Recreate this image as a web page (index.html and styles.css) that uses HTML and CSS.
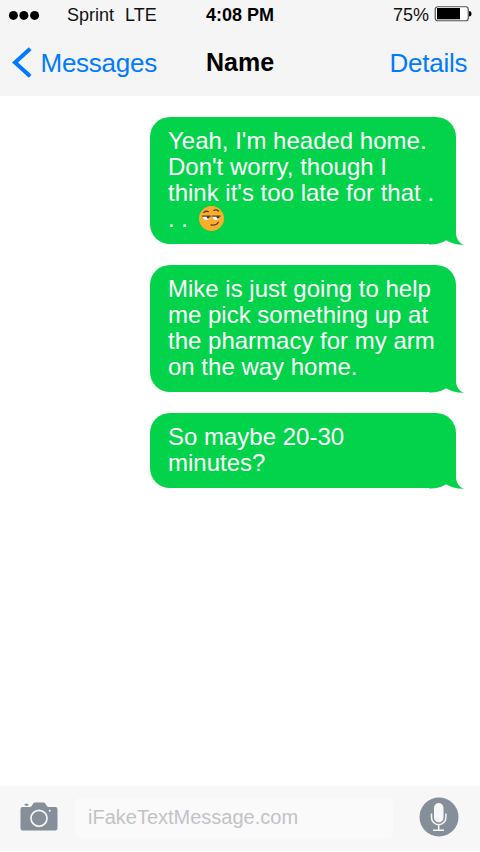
FILE: index.html
```html
<!DOCTYPE html>
<html lang="en">
<head>
<meta charset="utf-8">
<title>Messages</title>
<link rel="stylesheet" href="styles.css">
</head>
<body>
<div class="phone">
  <header class="top">
    <div class="status">
      <svg class="signal" width="32" height="10" viewBox="0 0 32 10"><circle cx="5.4" cy="5.4" r="4.5"/><circle cx="15.9" cy="5.4" r="4.5"/><circle cx="26.6" cy="5.4" r="4.5"/></svg>
      <span class="carrier">Sprint</span><span class="network">LTE</span>
      <span class="time">4:08 PM</span>
      <span class="percent">75%</span>
      <svg class="battery" width="38" height="16" viewBox="0 0 38 16"><rect x="1.25" y=".75" width="33" height="14" rx="2.5" fill="#fff" stroke="#555" stroke-width="1.2"/><rect x="3" y="2" width="23" height="11.3"/><path d="M35 5q2.5 0 2.5 2.7t-2.5 2.7z"/></svg>
    </div>
    <nav class="nav">
      <svg class="back" width="22" height="32" viewBox="0 0 22 32"><path d="M20.2 1.7 5 15.500 20.200 29.300" fill="none" stroke="#007aff" stroke-width="4"/></svg>
      <span class="messages">Messages</span>
      <h1>Name</h1>
      <span class="details">Details</span>
    </nav>
  </header>
  <main class="chat">
    <div class="bubble">Yeah, I'm headed home.<br>Don't worry, though I<br>think it's too late for that .<br>. . <svg class="emoji" viewBox="0 0 24 24"><circle cx="12" cy="12" r="12" fill="#fbad2b"/><path d="M3.500 9.700h7.200c0 5-7.200 5-7.200 0zm9.300 0H20c0 5-7.200 5-7.200 0z" fill="#fff"/><path d="M7.300 9.500h3c.2 3.400-3 3.400-3 0zm9.400 0h3c.2 3.400-3 3.400-3 0z" fill="#45352c"/><path d="M3.300 9.600h7.600m1.800 0h7.600M4.500 6.200q2.400-1.800 4.500-.8M14.300 4.200q2.400-1.400 4.500.6M11.500 18.200q5.500.5 7-2.700" fill="none" stroke="#59402a" stroke-width="1.200" stroke-linecap="round"/></svg><svg class="tail" viewBox="0 0 36 20"><path class="notch" d="M0 19.500 17 14 36 20z"/><path d="M0 10H27V8C27 13 30 18.500 35 19.800 28 20 21.500 18 17 15.300 12 18.700 7 19.800 0 19.600z"/></svg></div>
    <div class="bubble">Mike is just going to help<br>me pick something up at<br>the pharmacy for my arm<br>on the way home.<svg class="tail" viewBox="0 0 36 20"><path class="notch" d="M0 19.500 17 14 36 20z"/><path d="M0 10H27V8C27 13 30 18.500 35 19.800 28 20 21.500 18 17 15.300 12 18.700 7 19.800 0 19.600z"/></svg></div>
    <div class="bubble">So maybe 20-30<br>minutes?<svg class="tail" viewBox="0 0 36 20"><path class="notch" d="M0 19.500 17 14 36 20z"/><path d="M0 10H27V8C27 13 30 18.500 35 19.800 28 20 21.500 18 17 15.300 12 18.700 7 19.800 0 19.600z"/></svg></div>
  </main>
  <footer class="compose">
    <svg class="camera" width="38" height="30" viewBox="0 0 38 30"><path d="M2.500 5H10q1.500 0 2.500-2.300Q13.300.5 15 .5h8.500q1.700 0 2.500 2.200Q27 5 28.500 5h6.700q2.300 0 2.300 2.300v19q0 2.200-2.300 2.200H2.700Q.5 28.500.5 26.300V7.300Q.5 5 2.500 5z" fill="#868e99"/><rect x="4.500" y="1.700" width="4" height="2" rx="1" fill="#868e99"/><circle cx="19" cy="16.300" r="8" fill="none" stroke="#f7f7f7" stroke-width="1.700"/><circle cx="29.700" cy="8.800" r="1" fill="#f7f7f7"/></svg>
    <div class="field">iFakeTextMessage.com</div>
    <svg class="mic" width="40" height="40" viewBox="0 0 40 40"><circle cx="20" cy="20" r="19.500" fill="#868e99"/><rect x="15" y="6" width="9.500" height="19.500" rx="4.750" fill="#f7f7f7"/><path d="M12.500 16.500v4a7.200 7.200 0 0 0 14.400 0v-4M19.700 27.800v5M14 33.300h11" fill="none" stroke="#f7f7f7" stroke-width="1.500"/></svg>
  </footer>
</div>
</body>
</html>
```
FILE: styles.css
```css
* { box-sizing: border-box; }
body { margin: 0; background: #fff; font-family: "Liberation Sans", Arial, sans-serif; }
.phone { width: 480px; height: 852px; display: flex; flex-direction: column; overflow: hidden; }
.top { height: 96px; flex: none; background: #f5f5f5; }
.status { height: 30px; display: flex; align-items: center; font-size: 18px; line-height: 30px; color: #111; white-space: nowrap; }
.signal { margin-left: 8px; width: 32px; }
.carrier { margin-left: 27px; width: 58px; }
.network { width: 81px; }
.time { width: 187px; font-weight: bold; color: #000; }
.percent { width: 41px; }
.battery { margin-top: -3px; }
.nav { height: 66px; display: flex; align-items: center; color: #007aff; font-size: 26px; line-height: 34px; white-space: nowrap; }
.back { margin-left: 10px; }
.messages { margin-left: 8.5px; width: 165.5px; letter-spacing: -.25px; }
.nav h1 { margin: -2px 0 0; width: 183.5px; font-size: 25px; color: #000; }
.details { letter-spacing: -.25px; }
.chat { flex: 1; padding: 21px 24px 0 150px; display: flex; flex-direction: column; gap: 21px; }
.bubble { position: relative; width: 306px; padding: 11px 0 12px 18px; border-radius: 20px 20px 0 20px; background: #03d34a; color: #fff; font-size: 24px; line-height: 26px; white-space: nowrap; }
.emoji { width: 25px; height: 25px; margin: -3px 0 -3px 4px; vertical-align: -1px; }
.tail { position: absolute; left: 279px; bottom: -1px; width: 36px; height: 20px; fill: #03d34a; }
.tail .notch { fill: #fff; }
.compose { height: 65px; flex: none; margin-bottom: 1px; display: flex; align-items: center; background: #f7f7f7; }
.camera { margin-left: 20px; margin-top: -4px; }
.field { margin-left: 17px; width: 318px; height: 40px; margin-top: -1px; padding-left: 13px; border-radius: 5px; background: #fafafa; color: #c2c2c6; font-size: 20px; line-height: 38px; }
.mic { margin-left: 26px; margin-top: -3px; }
```
